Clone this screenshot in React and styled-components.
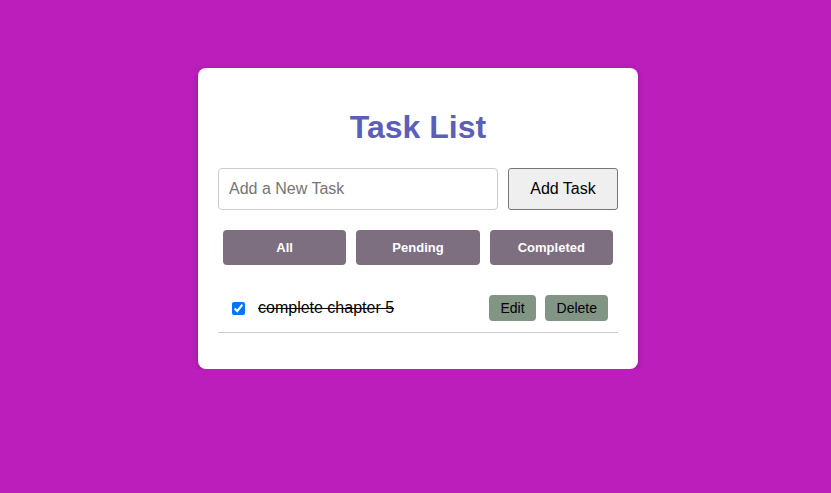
import React from 'react';
import styled, { createGlobalStyle } from 'styled-components';

const GlobalStyle = createGlobalStyle`
  body {
    margin: 0;
    background-color: #bb1ebb;
    font-family: 'Liberation Sans', Arial, sans-serif;
  }
`;

const Page = styled.div`
  display: flex;
  justify-content: center;
  padding: 68px 0 0 5px;
`;

const Card = styled.div`
  width: 400px;
  padding: 20px;
  background-color: #fff;
  border-radius: 8px;
  box-shadow: 0 2px 6px rgba(0, 0, 0, 0.2);
`;

const Title = styled.h1`
  margin: 21px 0 22px;
  font-size: 32px;
  text-align: center;
  color: #5c5fb8;
`;

const InputRow = styled.div`
  display: flex;
  gap: 10px;
`;

const TaskInput = styled.input`
  flex: 1;
  height: 42px;
  box-sizing: border-box;
  padding: 0 10px;
  border: 1px solid #ccc;
  border-radius: 4px;
  font-family: inherit;
  font-size: 16px;
  outline: none;

  &::placeholder {
    color: #757575;
  }
`;

const AddButton = styled.button`
  width: 110px;
  height: 42px;
  background-color: #efefef;
  border: 1px solid #767676;
  border-radius: 3px;
  font-family: inherit;
  font-size: 16px;
  color: #000;
`;

const Filters = styled.div`
  display: flex;
  margin-top: 15px;
`;

const FilterButton = styled.button`
  flex: 1;
  margin: 5px;
  height: 35px;
  background-color: #7d6e80;
  border: none;
  border-radius: 4px;
  color: #fff;
  font-family: inherit;
  font-size: 13px;
  font-weight: bold;
`;

const List = styled.ul`
  list-style: none;
  margin: 15px 0 16px;
  padding: 0;
`;

const Item = styled.li`
  display: flex;
  align-items: center;
  padding: 10px 10px 11px;
  border-bottom: 1px solid #ccc;
`;

const Check = styled.input`
  margin: 3px 3px 3px 4px;
  width: 13px;
  height: 13px;
`;

const TaskText = styled.span`
  flex: 1;
  margin-left: 10px;
  font-size: 16px;
  color: #000;
  text-decoration: ${props => (props.done ? 'line-through' : 'none')};
`;

const ActionButton = styled.button`
  margin-left: ${props => (props.first ? '0' : '9px')};
  height: 26px;
  padding: ${props => (props.first ? '0 11px' : '0 11px 0 12px')};
  background-color: #829585;
  border: none;
  border-radius: 4px;
  font-family: inherit;
  font-size: 14px;
  color: #000;
`;

const tasks = [{ id: 1, text: 'complete chapter 5', done: true }];

export default function App() {
  return (
    <Page>
      <GlobalStyle />
      <Card>
        <Title>Task List</Title>
        <InputRow>
          <TaskInput placeholder="Add a New Task" />
          <AddButton>Add Task</AddButton>
        </InputRow>
        <Filters>
          <FilterButton>All</FilterButton>
          <FilterButton>Pending</FilterButton>
          <FilterButton>Completed</FilterButton>
        </Filters>
        <List>
          {tasks.map(t => (
            <Item key={t.id}>
              <Check type="checkbox" defaultChecked={t.done} />
              <TaskText done={t.done}>{t.text}</TaskText>
              <ActionButton first>Edit</ActionButton>
              <ActionButton>Delete</ActionButton>
            </Item>
          ))}
        </List>
      </Card>
    </Page>
  );
}
